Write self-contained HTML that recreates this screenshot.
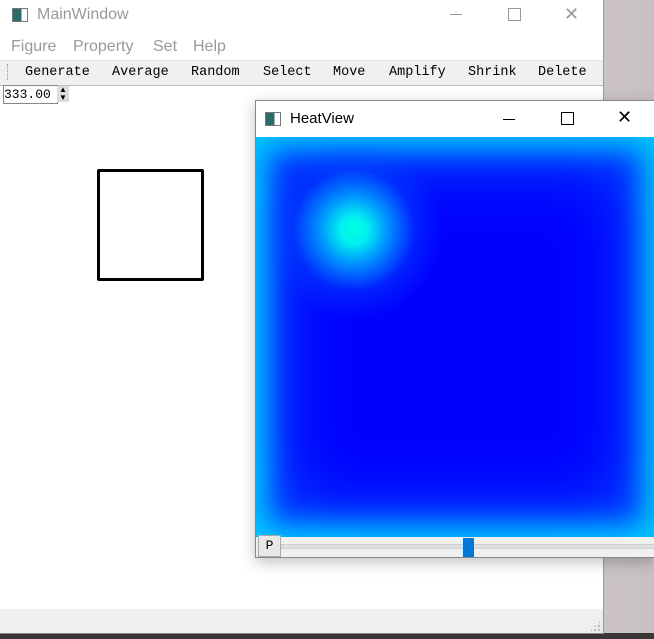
<!DOCTYPE html>
<html><head><style>
body{margin:0;width:654px;height:639px;overflow:hidden;position:relative;background:linear-gradient(90deg,#b8b0b8,#d8d2d6 50%,#c8c0c4);font-family:"Liberation Sans",sans-serif}
.abs{position:absolute}
.mono{font-family:"Liberation Mono",monospace}
.tb{position:absolute;top:65px;font-size:13.5px;font-family:"Liberation Mono",monospace;color:#000}
.mn{position:absolute;top:38px;font-size:16px;color:#999}
</style></head><body>
<div class="abs" style="left:0;top:633px;width:654px;height:6px;background:#3a3636"></div>
<div class="abs" style="left:0;top:0;width:603px;height:633px;background:#fff;border-right:1px solid #999;border-bottom:1px solid #888">
  <div class="abs" style="left:12px;top:8px;width:14px;height:12px;border:1px solid #777;background:linear-gradient(90deg,#2d6b6b 60%,#fff 60%)"></div>
  <div class="abs" style="left:37px;top:6px;font-size:16px;color:#999">MainWindow</div>
  <div class="abs" style="left:450px;top:14px;width:12px;height:1px;background:#999"></div>
  <div class="abs" style="left:508px;top:8px;width:11px;height:11px;border:1px solid #999"></div>
  <div class="abs" style="left:564px;top:4px;font-size:18px;color:#999">✕</div>
  <div class="mn" style="left:11px">Figure</div>
  <div class="mn" style="left:73px">Property</div>
  <div class="mn" style="left:153px">Set</div>
  <div class="mn" style="left:193px">Help</div>
  <div class="abs" style="left:0;top:60px;width:603px;height:24px;background:#f0f0f0;border-top:1px solid #e4e4e4;border-bottom:1px solid #bbb"></div>
  <div class="abs" style="left:7px;top:64px;width:1px;height:16px;border-left:1px dotted #999"></div>
  <div class="tb" style="left:25px">Generate</div>
  <div class="tb" style="left:112px">Average</div>
  <div class="tb" style="left:191px">Random</div>
  <div class="tb" style="left:263px">Select</div>
  <div class="tb" style="left:333px">Move</div>
  <div class="tb" style="left:389px">Amplify</div>
  <div class="tb" style="left:468px">Shrink</div>
  <div class="tb" style="left:538px">Delete</div>
  <div class="abs" style="left:3px;top:85px;width:53px;height:17px;border:1px solid #888;font-size:13px;font-family:'Liberation Mono',monospace;line-height:17px;background:#fff">333.00</div>
  <div class="abs" style="left:57px;top:86px;width:12px;height:16px;background:#ddd;font-size:8px;line-height:8px;text-align:center">▲<br>▼</div>
  <div class="abs" style="left:97px;top:169px;width:101px;height:106px;border:3px solid #000;border-radius:2px"></div>
  <div class="abs" style="left:0;top:609px;width:603px;height:24px;background:#efefef"></div>
</div>
<div class="abs" style="left:255px;top:100px;width:399px;height:456px;background:#fff;border:1px solid #888;border-right:none;box-shadow:0 4px 14px rgba(0,0,0,.25)">
  <div class="abs" style="left:9px;top:11px;width:14px;height:12px;border:1px solid #777;background:linear-gradient(90deg,#2d6b6b 60%,#fff 60%)"></div>
  <div class="abs" style="left:34px;top:9px;font-size:15px;color:#000">HeatView</div>
  <div class="abs" style="left:247px;top:18px;width:12px;height:1px;background:#000"></div>
  <div class="abs" style="left:305px;top:11px;width:11px;height:11px;border:1px solid #000"></div>
  <div class="abs" style="left:361px;top:6px;font-size:18px;color:#000">✕</div>
  <div class="abs" style="left:0;top:36px;width:399px;height:400px;background:#0000ff;box-shadow:inset 0 0 28px 12px #00c8ff,inset 0 0 70px 25px #0050ff;overflow:hidden">
    <div class="abs" style="left:8px;top:3px;width:180px;height:180px;border-radius:50%;background:radial-gradient(circle closest-side,#00ffe0 0%,#00f0f0 15%,rgba(0,180,255,.8) 38%,rgba(0,80,255,.4) 68%,rgba(0,0,255,0) 100%)"></div>
  </div>
  <div class="abs" style="left:0;top:436px;width:399px;height:20px;background:#f0f0f0"></div>
  <div class="abs mono" style="left:2px;top:434px;width:21px;height:20px;border:1px solid #aaa;background:#e8e8e8;font-size:13px;text-align:center;line-height:20px">P</div>
  <div class="abs" style="left:25px;top:443px;width:374px;height:3px;background:#e0e0e0;border:1px solid #d0d0d0"></div>
  <div class="abs" style="left:207px;top:437px;width:11px;height:19px;background:#0078d7"></div>
</div>
<div class="abs" style="left:589px;top:620px;width:12px;height:12px;background:radial-gradient(circle,#bbb 1px,transparent 1.5px) 0 0/4px 4px;clip-path:polygon(100% 0,100% 100%,0 100%)"></div>
</body></html>
